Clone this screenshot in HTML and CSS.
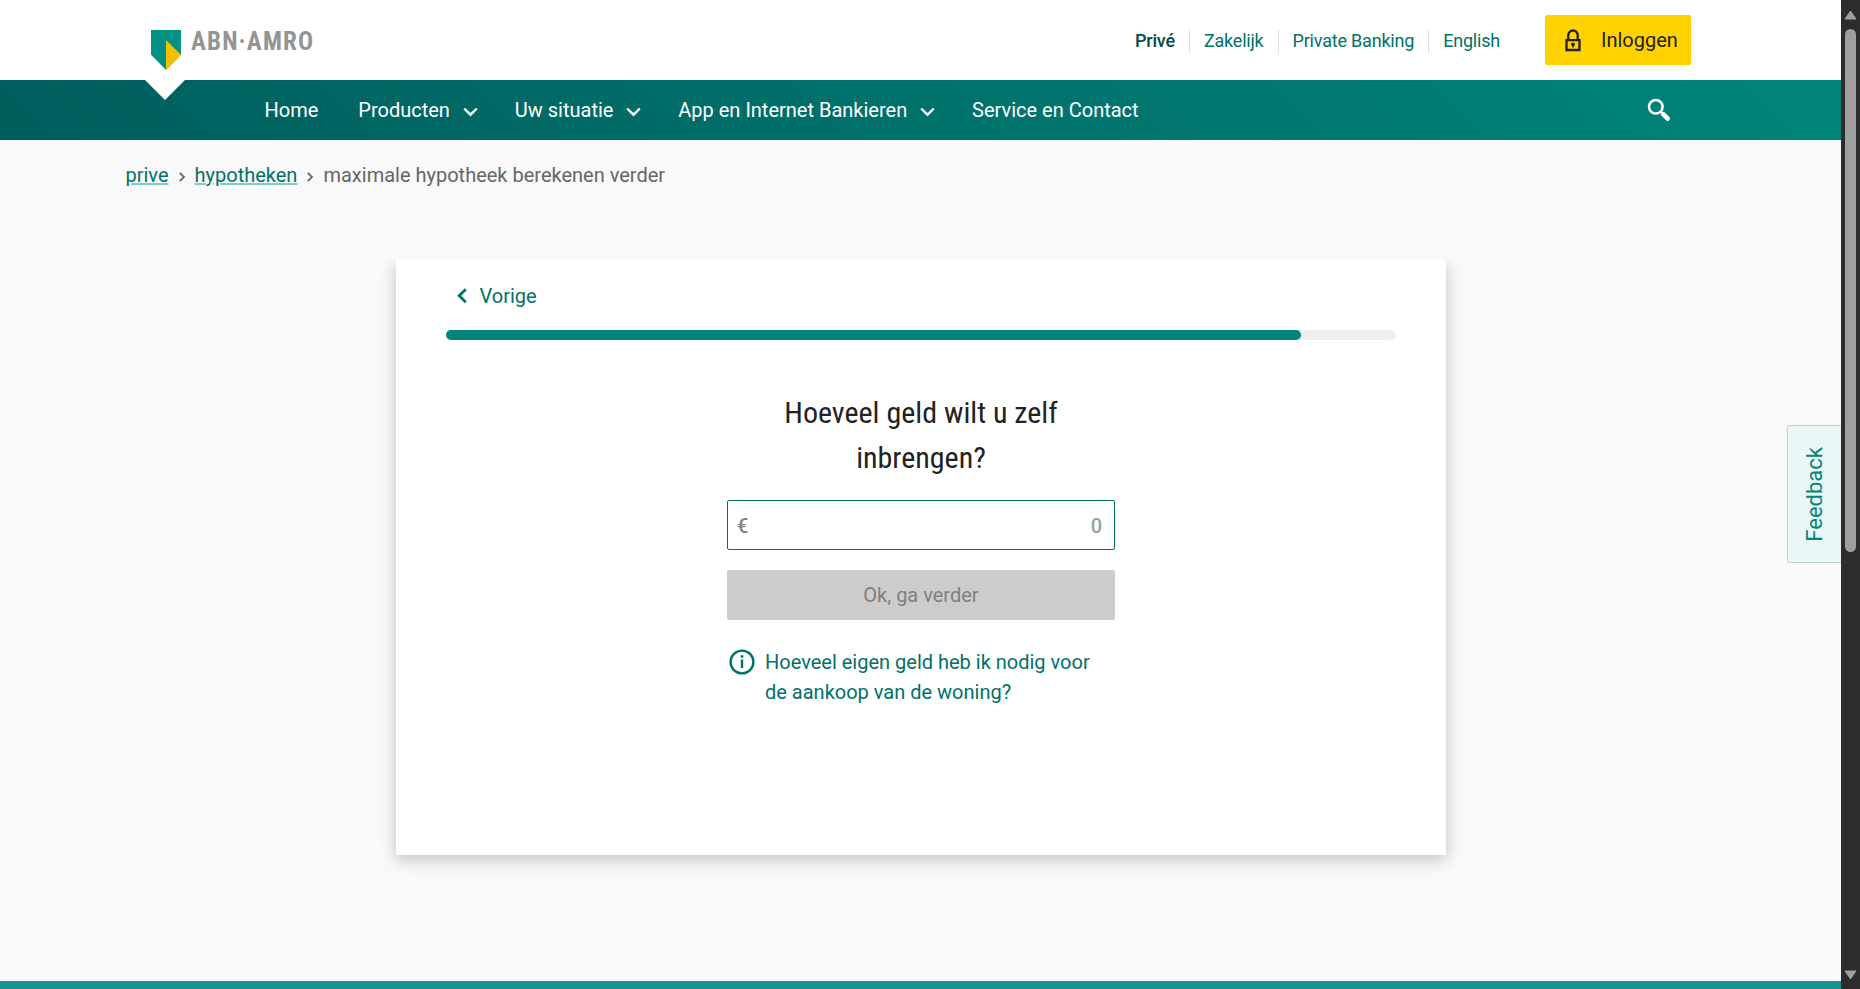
FILE: index.html
```html
<!DOCTYPE html>
<html lang="nl">
<head>
<meta charset="utf-8">
<title>Maximale hypotheek berekenen - ABN AMRO</title>
<link rel="stylesheet" href="styles.css">
</head>
<body>
<div class="page">
  <header class="top">
    <a class="logo">
      <svg class="shield" width="30" height="40" viewBox="0 0 30 40"><path fill="#009286" d="M0 0h30v24.7L15 40 0 24.7z"/><path fill="#f3c000" d="M15 10l15 14.7L15 40z"/></svg>
      <svg class="wordmark" width="124" height="26" viewBox="0 0 124 26"><text x="0" y="20.300" textLength="122" lengthAdjust="spacing">ABN·AMRO</text></svg>
    </a>
    <nav class="segments">
      <a class="current">Privé</a><a>Zakelijk</a><a>Private Banking</a><a>English</a>
    </nav>
    <a class="login">
      <svg width="16" height="23" viewBox="0 0 16 23"><path d="M3.300 10.500V6.200a4.700 4.700 0 0 1 9.400 0v4.300M1.500 11.200h13v9.800h-13z" fill="none" stroke="#222" stroke-width="2.300"/><circle cx="8" cy="15.300" r="1.900" fill="#222"/><path d="M7.200 15.500h1.600v3H7.200z" fill="#222"/></svg>
      <span>Inloggen</span>
    </a>
  </header>
  <div class="bar">
    <span class="notch"></span>
    <nav class="menu">
      <a>Home</a>
      <a>Producten <svg class="chev" width="15" height="10" viewBox="0 0 15 10"><path d="M1.200 1.500L7.500 7.700l6.300-6.200"/></svg></a>
      <a>Uw situatie <svg class="chev" width="15" height="10" viewBox="0 0 15 10"><path d="M1.200 1.500L7.500 7.700l6.300-6.200"/></svg></a>
      <a>App en Internet Bankieren <svg class="chev" width="15" height="10" viewBox="0 0 15 10"><path d="M1.200 1.500L7.500 7.700l6.300-6.200"/></svg></a>
      <a>Service en Contact</a>
    </nav>
    <svg class="search" width="24" height="24" viewBox="0 0 24 24"><circle cx="8.800" cy="8.800" r="6.800" fill="none" stroke="#fff" stroke-width="2.500"/><path d="M13.300 13.300l2.500 2.500" stroke="#fff" stroke-width="2"/><path d="M16.200 16.200l4.500 4.500" stroke="#fff" stroke-width="4.600" stroke-linecap="round"/></svg>
  </div>
  <div class="crumbs">
    <a>prive</a>
    <svg width="6" height="10" viewBox="0 0 6 10"><path d="M.8.800L5 5 .8 9.200"/></svg>
    <a>hypotheken</a>
    <svg width="6" height="10" viewBox="0 0 6 10"><path d="M.8.800L5 5 .8 9.200"/></svg>
    <span>maximale hypotheek berekenen verder</span>
  </div>
  <main class="card">
    <a class="back"><svg width="10" height="16" viewBox="0 0 10 16"><path d="M8.800 1.200L2.200 7.700l6.600 6.500"/></svg>Vorige</a>
    <div class="progress"><div class="fill" style="width:90%"></div></div>
    <form class="question">
      <h1>Hoeveel geld wilt u zelf inbrengen?</h1>
      <div class="amount"><span>€</span><span class="value">0</span></div>
      <div class="submit">Ok, ga verder</div>
      <a class="info">
        <svg width="26" height="26" viewBox="0 0 26 26"><circle cx="13" cy="13" r="11.400" fill="none" stroke="#00716b" stroke-width="2.400"/><path d="M13 10.500v8.500" stroke="#00716b" stroke-width="2.400"/><circle cx="13" cy="7.500" r="1.400" fill="#00716b"/></svg>
        <span>Hoeveel eigen geld heb ik nodig voor de aankoop van de woning?</span>
      </a>
    </form>
  </main>
  <footer class="footer"></footer>
</div>
<div class="scroll">
  <svg width="13" height="10" viewBox="0 0 13 10"><path d="M6.500 1L12 9H1z"/></svg>
  <div class="thumb"></div>
  <svg class="down" width="13" height="10" viewBox="0 0 13 10"><path d="M6.500 9L12 1H1z"/></svg>
</div>
<div class="feedback"><span>Feedback</span></div>
</body>
</html>
```
FILE: styles.css
```css
* { box-sizing: border-box; }
body {
  margin: 0;
  height: 989px;
  display: flex;
  overflow: hidden;
  font: 20px/30px Roboto, sans-serif;
  color: #222;
  background: #f9f9f9;
}
.page {
  width: 1841px;
  display: flex;
  flex-direction: column;
}
.top {
  height: 80px;
  flex: none;
  display: flex;
  align-items: flex-start;
  padding-left: 151px;
  padding-right: 150px;
  background: #fff;
}
.logo { display: flex; padding-top: 30px; }
.wordmark { margin-left: 10px; overflow: visible; }
.wordmark text {
  font: 700 25px "Roboto Condensed", Roboto, sans-serif;
  fill: #949494;
}
.segments {
  display: flex;
  margin-left: auto;
  margin-right: 45px;
  padding-top: 30px;
  font-size: 18px;
  line-height: 22px;
  letter-spacing: -0.2px;
  color: #00716b;
}
.segments a { height: 23px; padding-left: 14px; }
.segments a:not(:last-child) {
  padding-right: 14px;
  border-right: 1px solid #dedede;
}
.segments .current { color: #004c4c; font-weight: 500; }
.login {
  width: 146px;
  height: 50px;
  margin-top: 15px;
  padding-left: 20px;
  border-radius: 2px;
  background: #ffd200;
  display: flex;
  align-items: center;
  gap: 20px;
}
.bar {
  position: relative;
  height: 60px;
  flex: none;
  display: flex;
  align-items: center;
  padding-left: 264.500px;
  padding-right: 170px;
  background: linear-gradient(45deg, #005e5d, #00857a);
  color: #fff;
}
.notch {
  position: absolute;
  left: 145px;
  top: 0;
  border: 20px solid transparent;
  border-top-color: #fff;
  border-bottom: 0;
}
.menu { display: flex; gap: 40px; }
.menu a { display: flex; align-items: center; }
.chev { margin: 4px -3px 0 12.900px; }
.chev path { fill: none; stroke: #fff; stroke-width: 2.400; }
.search { margin-left: auto; }
.crumbs {
  height: 70px;
  flex: none;
  display: flex;
  align-items: center;
  padding-left: 125.500px;
  gap: 10px;
  color: #666;
}
.crumbs a {
  color: #00716b;
  text-decoration: underline 2px #80cdc6;
  text-underline-offset: 1px;
}
.crumbs svg { margin-top: 3px; }
.crumbs path { fill: none; stroke: #666; stroke-width: 1.800; }
.card {
  width: 1050px;
  height: 595px;
  flex: none;
  margin: 50px 0 0 396px;
  padding: 21px 50px 0;
  background: #fff;
  box-shadow: 0 5px 15px rgba(0, 0, 0, .22);
  clip-path: inset(0 -30px -40px -30px);
}
.back {
  display: flex;
  align-items: center;
  gap: 13px;
  padding-left: 10.500px;
  color: #00716b;
}
.back path { fill: none; stroke: #00716b; stroke-width: 2.800; }
.progress {
  height: 10px;
  margin-top: 19px;
  border-radius: 5px;
  background: #efefef;
}
.fill { height: 10px; border-radius: 5px; background: #00857a; }
.question { width: 388px; margin: 50px auto 0; }
.question h1 {
  width: 300px;
  margin: 0 auto 20px;
  font: 400 30px/45px "Roboto Condensed", Roboto, sans-serif;
  text-align: center;
}
.amount {
  height: 50px;
  padding: 1px 12px 0 9px;
  border: 1px solid #00716b;
  border-radius: 2px;
  display: flex;
  align-items: center;
  justify-content: space-between;
  font-weight: 500;
  color: #7c8885;
}
.amount .value { color: #8fa4a2; }
.submit {
  height: 50px;
  margin-top: 20px;
  border-radius: 2px;
  background: #ccc;
  color: #808080;
  line-height: 50px;
  text-align: center;
}
.info {
  display: flex;
  gap: 10px;
  margin-top: 27px;
  padding-left: 2px;
  color: #00716b;
}
.info svg { flex: none; margin-top: 2px; }
.footer { height: 8px; margin-top: auto; background: #16938c; }
.scroll {
  width: 19px;
  display: flex;
  flex-direction: column;
  align-items: center;
  padding: 10px 0 9px;
  background: #2c2c2c;
}
.scroll path { fill: #9f9f9f; stroke: #9f9f9f; stroke-width: 1; stroke-linejoin: round; }
.thumb { width: 11px; height: 523px; margin-top: 9px; border-radius: 6px; background: #9f9f9f; }
.down { margin-top: auto; }
.feedback {
  position: absolute;
  left: 1787px;
  top: 425px;
  width: 54px;
  height: 138px;
  display: flex;
  align-items: center;
  justify-content: center;
  border: 1px solid #bdd3d1;
  border-right: 0;
  border-radius: 3px 0 0 3px;
  background: #ebf6f7;
  color: #00857a;
}
.feedback span {
  writing-mode: vertical-rl;
  transform: rotate(180deg);
  font-size: 22px;
  font-weight: 450;
  line-height: 50px;
}
```
